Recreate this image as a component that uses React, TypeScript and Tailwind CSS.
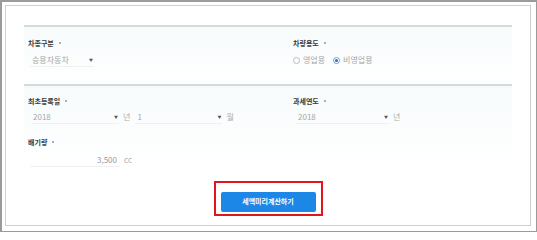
import React from "react";

const font = { fontFamily: '"Noto Sans CJK KR", "Noto Sans", sans-serif' };

function Label({ text }: { text: string }) {
  return (
    <div className="flex items-center h-[10px] text-[7px] font-bold text-[#3a3a3a] leading-none">
      <span>{text}</span>
      <span className="ml-[5px] w-[2px] h-[2px] rounded-full bg-[#8a97a8]" />
    </div>
  );
}

function Select({ value, width }: { value: string; width: string }) {
  return (
    <div
      className={`${width} h-[14px] flex items-center justify-between pl-[2px] pr-[1px] border-b border-[#f0f0f0] text-[8px] text-[#a6a6a6] leading-none`}
    >
      <span>{value}</span>
      <span className="text-[4px] text-[#555]">▼</span>
    </div>
  );
}

function Unit({ text }: { text: string }) {
  return <span className="ml-[4px] text-[8px] text-[#b0b0b0] leading-none">{text}</span>;
}

export default function App() {
  return (
    <div style={font} className="w-[537px] h-[232px] bg-white flex">
      <div className="flex-1 flex border-l-2 border-t-2 border-r border-b border-[#9b9b9b] pl-[3px] pt-[3px] pr-[5px] pb-[5px]">
        <div className="flex-1 border border-[#cfcfcf] px-[18px] pt-[19px]">
          {/* 차종 / 용도 */}
          <div className="h-[2px] bg-[#d2dada]" />
          <div className="grid grid-cols-[265px_1fr] pt-[11px] pb-[17px] bg-gradient-to-b from-[#f7fbfc] to-white">
            <div className="pl-[4px]">
              <Label text="차종구분" />
              <div className="mt-[5px] pl-[2px]">
                <Select value="승용자동차" width="w-[64px]" />
              </div>
            </div>
            <div className="pl-[4px]">
              <Label text="차량용도" />
              <div className="mt-[5px] h-[14px] flex items-center text-[8px] text-[#a6a6a6] leading-none">
                <span className="w-[7px] h-[7px] rounded-full border border-[#bbb] bg-white" />
                <span className="ml-[3px]">영업용</span>
                <span className="ml-[8px] w-[7px] h-[7px] rounded-full border border-[#6aa0d8] bg-white flex items-center justify-center">
                  <span className="w-[3px] h-[3px] rounded-full bg-[#2a6fc0]" />
                </span>
                <span className="ml-[3px]">비영업용</span>
              </div>
            </div>
          </div>

          {/* 등록일 / 과세연도 / 배기량 */}
          <div className="h-[2px] bg-[#d2dada]" />
          <div className="pt-[10px] bg-gradient-to-b from-[#f7fbfc] to-white">
            <div className="grid grid-cols-[265px_1fr]">
              <div className="pl-[4px]">
                <Label text="최초등록일" />
                <div className="mt-[4px] pl-[3px] flex items-center">
                  <Select value="2018" width="w-[88px]" />
                  <Unit text="년" />
                  <div className="ml-[5px]">
                    <Select value="1" width="w-[87px]" />
                  </div>
                  <Unit text="월" />
                </div>
              </div>
              <div className="pl-[4px]">
                <Label text="과세연도" />
                <div className="mt-[4px] pl-[3px] flex items-center">
                  <Select value="2018" width="w-[93px]" />
                  <Unit text="년" />
                </div>
              </div>
            </div>
            <div className="pl-[4px] mt-[13px]">
              <Label text="배기량" />
              <div className="mt-[6px] pl-[2px] flex items-center">
                <div className="w-[90px] h-[14px] flex items-center justify-end pr-[3px] border-b border-[#f0f0f0] text-[8px] text-[#9a9a9a] leading-none">
                  3,500
                </div>
                <Unit text="cc" />
              </div>
            </div>
          </div>

          <div className="mt-[14px] flex justify-center">
            <div className="border-2 border-[#e3141c] px-[5px] py-[2px]">
              <button className="w-[95px] h-[20px] rounded-[2px] bg-[#1c87e6] text-white text-[7px] font-bold leading-none">
                세액미리계산하기
              </button>
            </div>
          </div>
        </div>
      </div>
    </div>
  );
}
